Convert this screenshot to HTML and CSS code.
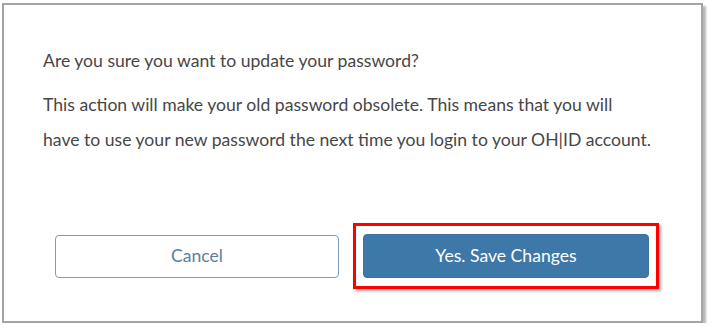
FILE: index.html
```html
<!DOCTYPE html>
<html>
<head>
<meta charset="utf-8">
<link rel="stylesheet" href="styles.css">
</head>
<body>
<div class="dialog">
  <div class="body">
    <p class="q">Are you sure you want to update your password?</p>
    <p class="msg">This action will make your old password obsolete. This means that you will<br>have to use your new password the next time you login to your OH|ID account.</p>
  </div>
  <div class="actions">
    <button class="btn cancel">Cancel</button>
    <div class="highlight">
      <button class="btn save">Yes. Save Changes</button>
    </div>
  </div>
</div>
</body>
</html>
```
FILE: styles.css
```css
html, body { margin: 0; padding: 0; background: #fff; }
body { font-family: "Lato", "Noto Sans", sans-serif; }
.dialog {
  margin: 3px 0 0 2px;
  width: 701px;
  height: 320px;
  box-sizing: border-box;
  border: 2px solid #a4a4a4;
  box-shadow: 3px 3px 2px rgba(0,0,0,0.28);
  background: #fff;
}
.body { padding: 44px 30px 0 39px; color: #474747; font-size: 17.6px; }
.q { margin: 0; line-height: 24px; }
.msg { margin: 14px 0 0; line-height: 35px; white-space: nowrap; }
.actions {
  display: flex;
  align-items: center;
  gap: 14px;
  margin: 66px 0 0 51px;
}
.btn {
  font-family: inherit;
  font-size: 17.6px;
  line-height: 1;
  padding: 0 0 1px;
  border-radius: 4px;
  box-sizing: border-box;
}
.cancel {
  width: 284px;
  height: 43px;
  background: #fff;
  border: 1px solid #7a9cc0;
  color: #5f7d9e;
}
.highlight {
  border: 3px solid #ff0000;
  padding: 8px 7px;
  box-shadow: 2px 2px 3px rgba(0,0,0,0.35);
}
.save {
  display: block;
  width: 286px;
  height: 44px;
  background: #3d78a8;
  border: 1px solid #3a72a0;
  color: #fff;
}
```
